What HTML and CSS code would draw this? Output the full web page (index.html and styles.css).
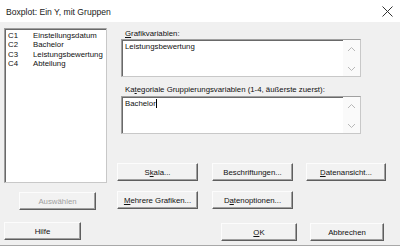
FILE: index.html
```html
<!DOCTYPE html>
<html lang="de">
<head>
<meta charset="utf-8">
<title>Boxplot: Ein Y, mit Gruppen</title>
<link rel="stylesheet" href="styles.css">
</head>
<body>
<div class="dialog">
  <div class="titlebar">
    <span class="title">Boxplot: Ein Y, mit Gruppen</span>
    <svg class="close" width="11" height="11" viewBox="0 0 11 11"><path d="M0.5 0.5 L10.5 10.5 M10.5 0.5 L0.5 10.5" stroke="#333" stroke-width="1" fill="none"/></svg>
  </div>
  <div class="content">
    <div class="main">
      <div class="left">
        <div class="listbox">
          <div class="row"><span class="col">C1</span><span>Einstellungsdatum</span></div>
          <div class="row"><span class="col">C2</span><span>Bachelor</span></div>
          <div class="row"><span class="col">C3</span><span>Leistungsbewertung</span></div>
          <div class="row"><span class="col">C4</span><span>Abteilung</span></div>
        </div>
        <button class="btn disabled auswahl">Auswählen</button>
      </div>
      <div class="right">
        <div class="fields">
          <div class="label"><u>G</u>rafikvariablen:</div>
          <div class="textbox">
            <div class="tb-text">Leistungsbewertung</div>
            <div class="scroll">
              <svg width="9" height="6" viewBox="0 0 9 6"><path d="M1 5 L4.5 1.5 L8 5" stroke="#b8b8b8" fill="none"/></svg>
              <svg width="9" height="6" viewBox="0 0 9 6"><path d="M1 1 L4.5 4.5 L8 1" stroke="#b8b8b8" fill="none"/></svg>
            </div>
          </div>
          <div class="label second">Ka<u>t</u>egoriale Gruppierungsvariablen (1-4, äußerste zuerst):</div>
          <div class="textbox">
            <div class="tb-text">Bachelor<span class="caret"></span></div>
            <div class="scroll">
              <svg width="9" height="6" viewBox="0 0 9 6"><path d="M1 5 L4.5 1.5 L8 5" stroke="#b8b8b8" fill="none"/></svg>
              <svg width="9" height="6" viewBox="0 0 9 6"><path d="M1 1 L4.5 4.5 L8 1" stroke="#b8b8b8" fill="none"/></svg>
            </div>
          </div>
        </div>
        <div class="btnrow first">
          <button class="btn">S<u>k</u>ala...</button>
          <button class="btn">Beschriftungen...</button>
          <button class="btn wide"><u>D</u>atenansicht...</button>
        </div>
        <div class="btnrow">
          <button class="btn"><u>M</u>ehrere Grafiken...</button>
          <button class="btn">D<u>a</u>tenoptionen...</button>
        </div>
      </div>
    </div>
    <div class="footer">
      <button class="btn">Hilfe</button>
      <button class="btn ok"><u>O</u>K</button>
      <button class="btn cancel">Abbrechen</button>
    </div>
  </div>
</div>
</body>
</html>
```
FILE: styles.css
```css
* { box-sizing: border-box; }
html, body { margin: 0; padding: 0; }
body {
  width: 400px;
  height: 246px;
  overflow: hidden;
  font-family: "Liberation Sans", Arial, sans-serif;
  font-size: 7.8px;
  color: #111;
  background: #f0f0f0;
}
.dialog { width: 400px; height: 246px; display: flex; flex-direction: column; }
.titlebar {
  height: 22px;
  background: #fff;
  display: flex;
  align-items: center;
  justify-content: space-between;
  padding: 1px 7px 0 6px;
}
.title { font-size: 8.6px; color: #1a1a1a; }
.close { display: block; margin-top: -1px; }
.content {
  flex: 1;
  background: #f0f0f0;
  border-bottom: 1px solid #a8a8a8;
  display: flex;
  flex-direction: column;
}
.main { display: flex; padding-top: 6px; }
.left { width: 103px; margin-left: 4px; display: flex; flex-direction: column; }
.listbox {
  height: 155px;
  background: #fff;
  border: 1px solid #a0a0a0;
  border-right-color: #c8c8c8;
  border-bottom-color: #c8c8c8;
  box-shadow: inset 1px 1px 0 #696969;
  padding: 2px 0 0 3px;
}
.row { display: flex; height: 9.4px; line-height: 9.4px; white-space: nowrap; }
.col { width: 25px; }
.btn {
  font-family: "Liberation Sans", Arial, sans-serif;
  font-size: 7.8px;
  color: #111;
  height: 18px;
  width: 81px;
  padding: 0;
  background: #f2f2f2;
  border: 1px solid;
  border-color: #fcfcfc #5e5e5e #5e5e5e #fcfcfc;
  box-shadow: inset -1px -1px 0 #a0a0a0;
  border-radius: 0;
  text-align: center;
  line-height: 15px;
}
.btn u { text-underline-offset: 1px; }
.disabled { color: #a0a0a0; }
.auswahl { width: 77px; margin: 9px 0 0 15px; }
.right { margin-left: 10px; flex: 1; }
.fields { margin-left: 4px; width: 240px; }
.label { height: 11px; padding-left: 4px; line-height: 10px; padding-top: 1px; white-space: nowrap; }
.label.second { margin-top: 7px; height: 12px; padding-top: 1px; }
.textbox {
  height: 38px;
  background: #fff;
  border: 1px solid #a0a0a0;
  border-right-color: #c8c8c8;
  border-bottom-color: #c8c8c8;
  box-shadow: inset 1px 1px 0 #696969;
  display: flex;
}
.tb-text { flex: 1; padding: 2px 0 0 3px; line-height: 9px; white-space: nowrap; }
.caret { display: inline-block; width: 1px; height: 9px; background: #000; vertical-align: -2px; }
.scroll {
  width: 17px;
  display: flex;
  flex-direction: column;
  justify-content: space-between;
  align-items: center;
  padding: 6px 0 4px;
  background: #fafafa;
}
.scroll svg { display: block; }
.btnrow { display: flex; gap: 14px; margin-top: 10px; }
.btnrow.first { margin-top: 29px; }
.btnrow .btn.wide { width: 80px; margin-left: -1px; }
.footer { display: flex; margin-top: 12px; padding-left: 4px; align-items: flex-start; }
.footer .btn { width: 77px; }
.footer .ok { width: 76px; margin-left: 140px; margin-top: 1px; }
.footer .cancel { width: 74px; margin-left: 13px; margin-top: 1px; }
```
